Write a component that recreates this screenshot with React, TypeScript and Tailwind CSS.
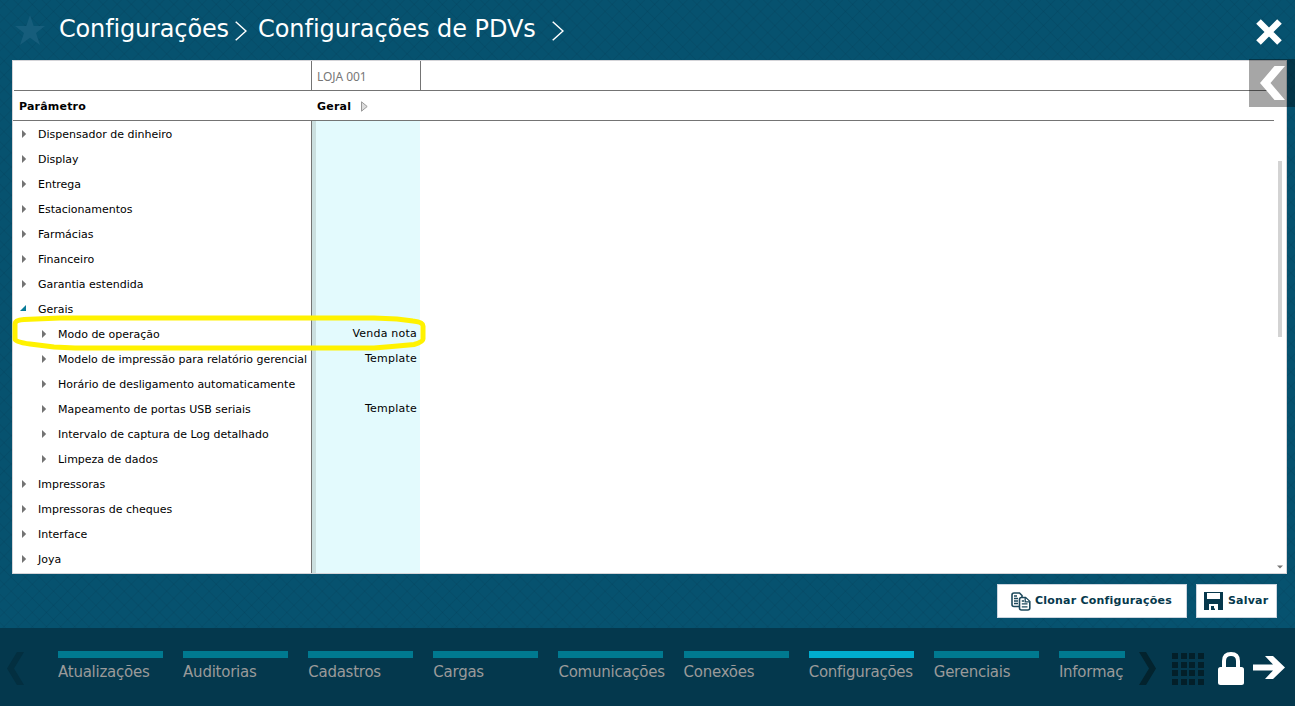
import { ReactNode } from 'react';

type Row = {
  label: string;
  level?: number;
  open?: boolean;
  value?: string;
};

const rows: Row[] = [
  { label: 'Dispensador de dinheiro' },
  { label: 'Display' },
  { label: 'Entrega' },
  { label: 'Estacionamentos' },
  { label: 'Farmácias' },
  { label: 'Financeiro' },
  { label: 'Garantia estendida' },
  { label: 'Gerais', open: true },
  { label: 'Modo de operação', level: 1, value: 'Venda nota' },
  { label: 'Modelo de impressão para relatório gerencial', level: 1, value: 'Template' },
  { label: 'Horário de desligamento automaticamente', level: 1 },
  { label: 'Mapeamento de portas USB seriais', level: 1, value: 'Template' },
  { label: 'Intervalo de captura de Log detalhado', level: 1 },
  { label: 'Limpeza de dados', level: 1 },
  { label: 'Impressoras' },
  { label: 'Impressoras de cheques' },
  { label: 'Interface' },
  { label: 'Joya' },
];

const tabs = [
  'Atualizações',
  'Auditorias',
  'Cadastros',
  'Cargas',
  'Comunicações',
  'Conexões',
  'Configurações',
  'Gerenciais',
  'Informaç',
];

const Crumb = () => (
  <svg width="12" height="20" viewBox="0 0 12 20" fill="none" stroke="white" strokeWidth="1.5">
    <path d="M0.7 0.8L11 10L0.7 19.2" />
  </svg>
);

const Arrow = ({ open }: { open?: boolean }) =>
  open ? (
    <svg width="6" height="6" viewBox="0 0 6 6" className="-ml-px -mt-0.5">
      <path d="M6 0V6H0Z" fill="#087b98" />
    </svg>
  ) : (
    <svg width="6" height="8" viewBox="0 0 6 8">
      <path d="M1 0L5.2 4L1 8Z" fill="#737373" />
    </svg>
  );

const Header = () => (
  <header className="flex h-[60px] shrink-0 items-start text-white">
    <svg width="32" height="30" viewBox="0 0 32 30" className="ml-3.5 mt-[15px]">
      <path d="M16 0L19.7 11H31L22 18L26 30L16 22.7L6 30L10 18L1 11H12.3Z" fill="#165d7b" />
    </svg>
    <h1 className="ml-[13px] mt-[13px] w-[176px] whitespace-nowrap text-[24px] leading-8 tracking-[-0.16px]">Configurações</h1>
    <div className="mt-[21px]"><Crumb /></div>
    <h2 className="ml-[11px] mt-[13px] w-[294px] whitespace-nowrap text-[24px] leading-8 tracking-[-0.04px]">Configurações de PDVs</h2>
    <div className="mt-[21px]"><Crumb /></div>
    <svg width="26" height="26" viewBox="0 0 26 26" className="ml-auto mr-[13px] mt-[19px]">
      <path d="M2.5 2.5L23.5 23.5M23.5 2.5L2.5 23.5" stroke="white" strokeWidth="6.5" />
    </svg>
  </header>
);

const Grid = () => (
  <main className="relative ml-3 h-[514px] w-[1275px] shrink-0 border border-[#d4d4d8] bg-white text-[11px] text-black">
    <div className="ml-px flex h-[30px] w-[1260px] border-b border-[#747474]">
      <div className="w-[298px] border-r border-[#747474]" />
      <div className="w-[109px] border-r border-[#747474] pl-[5px] font-['Noto_Sans',sans-serif] text-[12px] leading-[31px] tracking-[-0.05px] text-[#777]">
        LOJA 001
      </div>
    </div>
    <div className="flex h-[30px] w-[1261px] items-center border-b border-[#747474] font-bold">
      <div className="w-[304px] pl-1.5 pt-[3px] tracking-[0.2px]">Parâmetro</div>
      <div className="pt-[3px] tracking-[0.2px]">Geral</div>
      <svg width="7" height="11" viewBox="0 0 7 11" className="ml-2.5 mt-0.5">
        <path d="M0.5 0.8L6.2 5.5L0.5 10.2Z" fill="#ddd" stroke="#999" />
      </svg>
    </div>
    <div className="flex h-[452px] overflow-hidden">
      <div className="w-[299px] border-r border-[#747474]">
        {rows.map((row) => (
          <div
            key={row.label}
            className={`flex h-[25px] items-center whitespace-nowrap ${row.level ? 'pl-7' : 'pl-2'}`}
          >
            <span className="flex w-[17px] items-center"><Arrow open={row.open} /></span>
            <span className={`pt-1 ${row.level ? 'tracking-[-0.01px]' : ''}`}>{row.label}</span>
          </div>
        ))}
      </div>
      <div className="w-[108px] border-l-4 border-[#cbdfdf] bg-[#e3fafd]">
        {rows.map((row) => (
          <div key={row.label} className="h-[25px] pr-[3px] text-right leading-[25px] tracking-[0.22px]">
            {row.value}
          </div>
        ))}
      </div>
    </div>

    {/* Highlight around the selected parameter */}
    <svg width="415" height="36" viewBox="0 0 415 36" className="absolute -left-px top-[254px]" fill="none">
      <path
        d="M3 9Q3 5 12 4.5L48 3H362L385 4L401 6Q411 7 411 11V24Q411 27 402 29.5L380 31.5L362 33H63L42 32L18 29Q3 27 3 24Z"
        stroke="#fff200"
        strokeWidth="5"
      />
    </svg>
    <div className="absolute right-1 top-[100px] h-[176px] w-1 bg-[#d3d3d3]" />
    <svg width="6" height="4" viewBox="0 0 6 4" className="absolute bottom-1 right-[3px]">
      <path d="M0 0.5H6L3 3.5Z" fill="#777" />
    </svg>
    <div className="absolute -right-[9px] -top-0.5 flex h-12 w-[46px] items-center bg-black/35">
      <svg width="26" height="34" viewBox="0 0 26 34" className="ml-[11px]">
        <path d="M14.5 0H25L10.5 17L25 34H14.5L0 17Z" fill="white" />
      </svg>
    </div>
  </main>
);

const Button = ({ children, className }: { children: ReactNode; className: string }) => (
  <button
    className={`flex h-[34px] items-center whitespace-nowrap border border-[#ccd5df] bg-white text-[11px] font-bold text-[#06384c] ${className}`}
  >
    {children}
  </button>
);

const Actions = () => (
  <div className="flex h-[54px] shrink-0 items-start justify-end gap-[9px] pr-[18px] pt-2.5">
    <Button className="w-[190px] pl-[13px]">
      <svg width="20" height="19" viewBox="0 0 20 19" fill="white" stroke="#1d495c" strokeWidth="1.6">
        <path d="M3 1H8.5L11 3.5V14.5H3Q1 14.5 1 12.5V3Q1 1 3 1Z" />
        <path d="M3 4H6M3 6.5H7M3 9H7M3 11.5H7" strokeWidth="1.3" />
        <path d="M10.5 5.5H14.5L18.8 9.5V16Q18.8 18 16.8 18H10.5Q8.5 18 8.5 16V7.5Q8.5 5.5 10.5 5.5Z" />
        <path d="M10.8 9H13M10.8 11.8H16.5M10.8 14.8H16.5M14.2 6V9.8H18.5" strokeWidth="1.3" />
      </svg>
      <span className="ml-1 tracking-[0.22px]">Clonar Configurações</span>
    </Button>
    <Button className="w-[81px] pl-[7px]">
      <svg width="19" height="18" viewBox="0 0 19 18">
        <path d="M0 0H19V18H0Z" fill="#06384c" />
        <path d="M3 1H16V7H3ZM5 12H14V18H11V16.5H8V18H5Z" fill="white" />
        <path d="M7 14H10V18H7Z" fill="#06384c" />
      </svg>
      <span className="ml-[5px] tracking-[0.2px]">Salvar</span>
    </Button>
  </div>
);

const Footer = () => (
  <footer className="flex h-[78px] shrink-0 items-start bg-[#04384d]">
    <svg width="17" height="33" viewBox="0 0 17 33" className="ml-[7px] mt-6">
      <path d="M10 0H17L7 16.5L17 33H10L0 16.5Z" fill="#032f40" />
    </svg>
    <nav className="ml-[34px] mt-[23px] flex w-[1067px] gap-[20.12px] overflow-hidden">
      {tabs.map((tab) => (
        <div key={tab} className="w-[105px] shrink-0">
          <div className={`h-[7px] ${tab === 'Configurações' ? 'bg-[#00accf]' : 'bg-[#007990]'}`} />
          <div className="mt-[3px] whitespace-nowrap text-[15px] leading-[22px] tracking-[-0.25px] text-[#9a9a9a]">{tab}</div>
        </div>
      ))}
    </nav>
    <svg width="17" height="33" viewBox="0 0 17 33" className="ml-3.5 mt-6">
      <path d="M0 0H7L17 16.5L7 33H0L10 16.5Z" fill="#03232e" />
    </svg>
    <div className="ml-4 mt-[25px] grid grid-cols-[repeat(4,6px)] gap-x-[2.7px] gap-y-[2.7px]">
      {Array.from({ length: 16 }, (_, i) => (
        <div key={i} className="h-1.5 w-1.5 bg-[#031f29]" />
      ))}
    </div>
    <svg width="26" height="33" viewBox="0 0 26 33" className="ml-3.5 mt-6">
      <path d="M6 17V9Q6 2 13 2Q20 2 20 9V17" fill="none" stroke="white" strokeWidth="4" />
      <rect y="15" width="26" height="18" rx="2.5" fill="white" />
    </svg>
    <svg width="32" height="23" viewBox="0 0 32 23" className="ml-[9px] mt-[28px]">
      <path d="M0 8.5H20L12 0H20L32 11.5L20 23H12L20 14.5H0Z" fill="white" />
    </svg>
  </footer>
);

const App = () => {
  return (
    <div className="flex h-[706px] w-[1295px] flex-col overflow-hidden bg-[#06526f] bg-[repeating-linear-gradient(45deg,transparent_0_8px,rgba(0,30,50,0.09)_9px,transparent_10px),repeating-linear-gradient(-45deg,transparent_0_8px,rgba(0,30,50,0.09)_9px,transparent_10px)] font-['Verdana','DejaVu_Sans',sans-serif]">
      <Header />
      <Grid />
      <Actions />
      <Footer />
    </div>
  );
};

export default App;
